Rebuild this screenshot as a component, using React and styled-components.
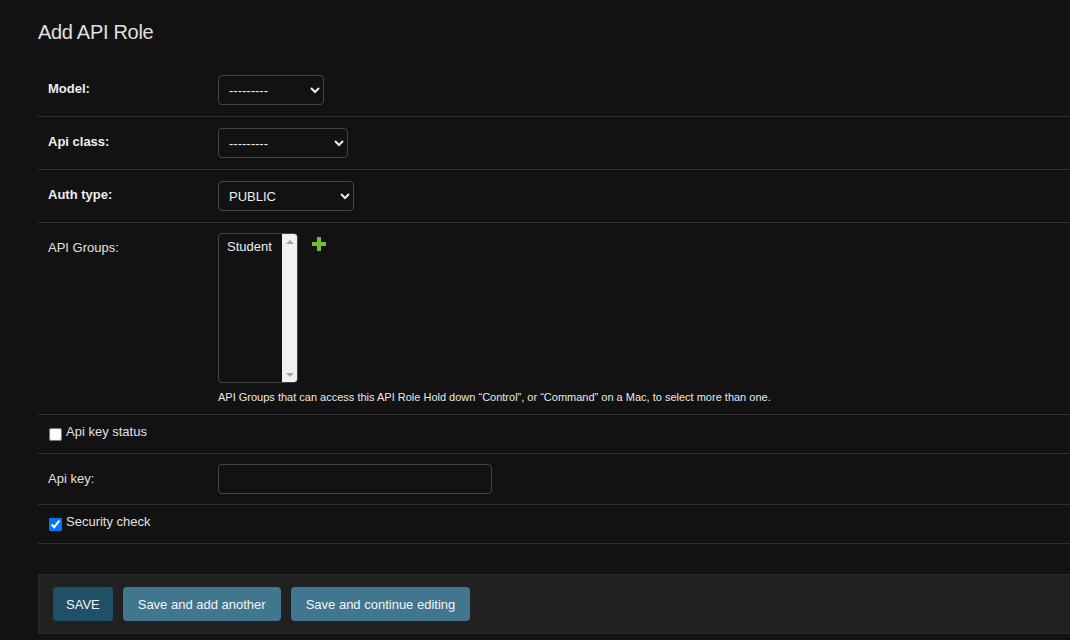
import React from "react";
import styled, { createGlobalStyle } from "styled-components";

const Global = createGlobalStyle`
  html, body { margin: 0; padding: 0; background: #121212; }
  body {
    font-family: "Liberation Sans", Arial, sans-serif;
    font-size: 13px;
    color: #eeeeee;
  }
`;

const Page = styled.div`
  padding: 20px 0 0 38px;
  min-height: 640px;
  box-sizing: border-box;
  overflow: hidden;
`;

const Title = styled.h1`
  margin: 0 0 20px;
  font-size: 20px;
  line-height: 24px;
  font-weight: 300;
  letter-spacing: -0.3px;
  color: #e0e0e0;
`;

const Fieldset = styled.div`
  display: flex;
  flex-direction: column;
`;

const Row = styled.div`
  display: flex;
  align-items: flex-start;
  padding: 10px;
  border-bottom: 1px solid #2e2e2e;
`;

const Label = styled.label`
  width: 170px;
  flex: none;
  padding-top: 7px;
  line-height: 16px;
  font-size: 13px;
  font-weight: ${(p) => (p.$required ? 700 : 400)};
  color: ${(p) => (p.$required ? "#eeeeee" : "#e0e0e0")};
`;

const Field = styled.div`
  display: flex;
  flex-direction: column;
  gap: 7px;
`;

const FieldLine = styled.div`
  display: flex;
  align-items: flex-start;
  gap: 13px;
`;

const Select = styled.select`
  height: 30px;
  width: ${(p) => p.$w}px;
  margin: 1px 0;
  box-sizing: border-box;
  background: #121212;
  color: #eeeeee;
  border: 1px solid #454545;
  border-radius: 4px;
  padding: 0 6px;
  font-family: inherit;
  font-size: 13px;
`;

const ListBox = styled.div`
  width: 80px;
  height: 150px;
  box-sizing: border-box;
  border: 1px solid #454545;
  border-radius: 4px;
  display: flex;
  overflow: hidden;
  background: #121212;
`;

const ListOptions = styled.ul`
  flex: 1;
  list-style: none;
  margin: 0;
  padding: 5px 0 0 8px;
`;

const ListOption = styled.li`
  font-size: 13px;
  line-height: 16px;
  color: #eeeeee;
`;

const ScrollTrack = styled.div`
  width: 15px;
  flex: none;
  background: #f1f1f1;
  display: flex;
  flex-direction: column;
  justify-content: space-between;
  align-items: center;
  padding: 6px 0 5px;
`;

const Arrow = styled.span`
  width: 0;
  height: 0;
  border-left: 4px solid transparent;
  border-right: 4px solid transparent;
  ${(p) =>
    p.$down
      ? "border-top: 4px solid #a3a3a3;"
      : "border-bottom: 4px solid #a3a3a3;"}
`;

const Help = styled.div`
  font-size: 11px;
  line-height: 14px;
  color: #e8e8e8;
`;

const AddLink = styled.a`
  display: inline-flex;
  margin-top: 3px;
`;

const CheckRow = styled.div`
  display: flex;
  align-items: flex-start;
  gap: 4px;
  padding: 10px;
  border-bottom: 1px solid #2e2e2e;
  height: 18px;
`;

const Check = styled.input`
  width: 13px;
  height: 13px;
  margin: 3px 0 0 1px;
  accent-color: #0075ff;
`;

const CheckLabel = styled.label`
  font-size: 13px;
  line-height: 14px;
  color: #e0e0e0;
`;

const TextInput = styled.input`
  width: 274px;
  height: 30px;
  box-sizing: border-box;
  background: #121212;
  border: 1px solid #454545;
  border-radius: 4px;
  color: #eee;
`;

const SubmitRow = styled.div`
  margin-top: 30px;
  display: flex;
  gap: 10px;
  padding: 12px 14px;
  background: #212121;
  border: 1px solid #2a2a2a;
  border-right: none;
`;

const Button = styled.button`
  height: 34px;
  padding: 0 ${(p) => (p.$primary ? 13 : 15)}px;
  border: none;
  border-radius: 4px;
  background: ${(p) => (p.$primary ? "#205067" : "#41768f")};
  color: #f4f4f4;
  font-family: inherit;
  font-size: 13px;
  cursor: pointer;
`;

const PlusIcon = () => (
  <svg width="16" height="16" viewBox="0 0 16 16">
    <path d="M6 1h4v5h5v4h-5v5H6v-5H1V6h5z" fill="#70bf2b" />
  </svg>
);

export default function App() {
  return (
    <>
      <Global />
      <Page>
        <Title>Add API Role</Title>
        <Fieldset>
          <Row>
            <Label $required>Model:</Label>
            <Select $w={106} defaultValue="">
              <option value="">---------</option>
            </Select>
          </Row>
          <Row>
            <Label $required>Api class:</Label>
            <Select $w={130} defaultValue="">
              <option value="">---------</option>
            </Select>
          </Row>
          <Row>
            <Label $required>Auth type:</Label>
            <Select $w={136} defaultValue="PUBLIC">
              <option value="PUBLIC">PUBLIC</option>
            </Select>
          </Row>
          <Row>
            <Label>API Groups:</Label>
            <Field>
              <FieldLine>
                <ListBox role="listbox" aria-multiselectable="true">
                  <ListOptions>
                    <ListOption role="option">Student</ListOption>
                  </ListOptions>
                  <ScrollTrack>
                    <Arrow />
                    <Arrow $down />
                  </ScrollTrack>
                </ListBox>
                <AddLink>
                  <PlusIcon />
                </AddLink>
              </FieldLine>
              <Help>
                API Groups that can access this API Role Hold down “Control”, or “Command” on a Mac, to select more than one.
              </Help>
            </Field>
          </Row>
          <CheckRow>
            <Check type="checkbox" id="aks" />
            <CheckLabel htmlFor="aks">Api key status</CheckLabel>
          </CheckRow>
          <Row>
            <Label>Api key:</Label>
            <TextInput type="text" />
          </Row>
          <CheckRow>
            <Check type="checkbox" id="sc" defaultChecked />
            <CheckLabel htmlFor="sc">Security check</CheckLabel>
          </CheckRow>
        </Fieldset>
        <SubmitRow>
          <Button $primary>SAVE</Button>
          <Button>Save and add another</Button>
          <Button>Save and continue editing</Button>
        </SubmitRow>
      </Page>
    </>
  );
}
